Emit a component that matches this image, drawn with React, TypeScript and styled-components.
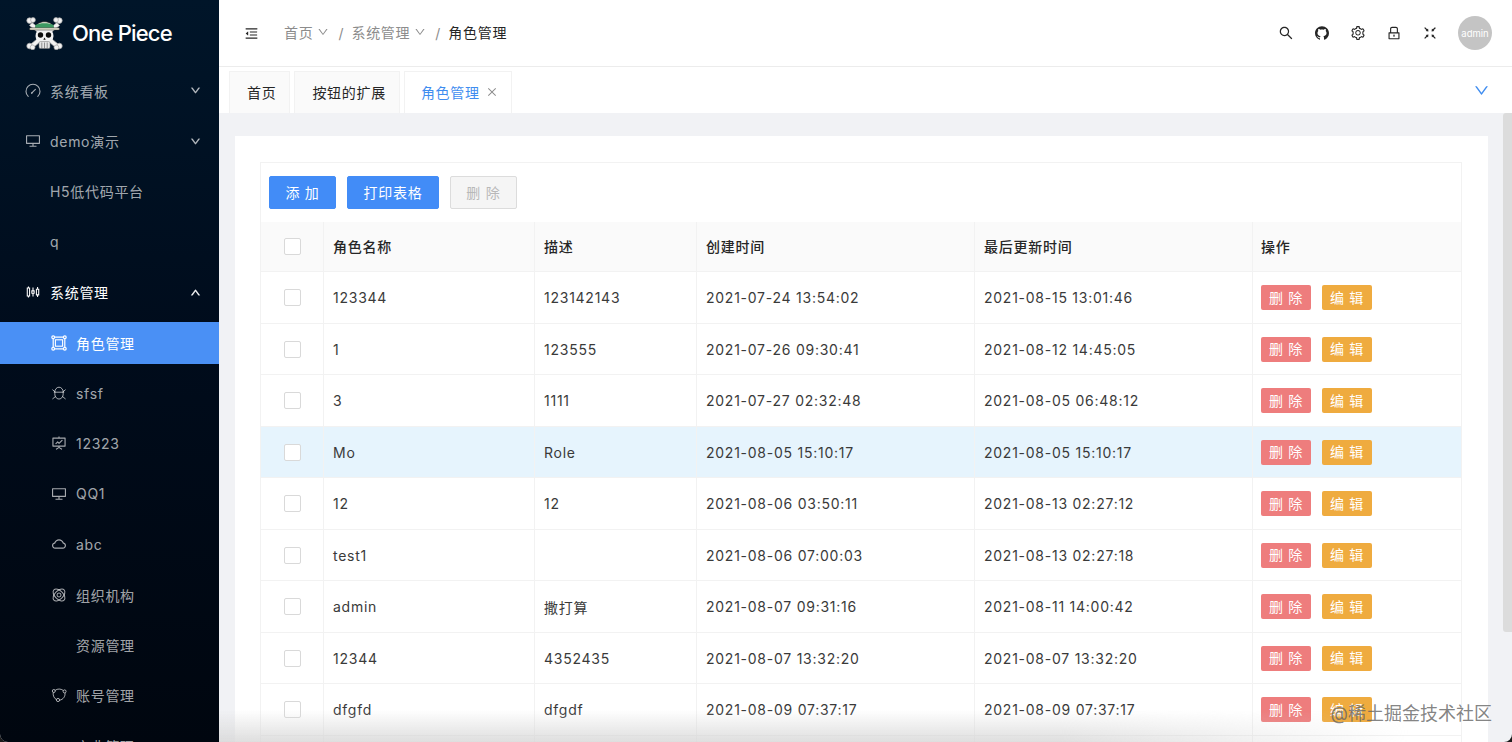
import React from "react";
import styled, { createGlobalStyle } from "styled-components";
import {
  AiOutlineDesktop, AiOutlineSliders,
  AiOutlineFundProjectionScreen, AiOutlineCloud, AiOutlineDown,
  AiOutlineUp, AiOutlineMenuFold, AiOutlineSearch, AiFillGithub, AiOutlineSetting,
  AiOutlineLock, AiOutlineFullscreenExit, AiOutlineClose,
} from "react-icons/ai";

const FONT = `Inter, "Noto Sans CJK SC", "Noto Sans", sans-serif`;

const Global = createGlobalStyle`
  html, body { margin: 0; padding: 0; height: 100%; overflow: hidden; }
  body { font-family: ${FONT}; font-size: 14px; color: #262626; background: #1a1a1a; }
  #root { height: 742px; }
  * { box-sizing: border-box; }
`;

const Shell = styled.div`
  position: relative;
  display: flex;
  width: 1512px;
  height: 742px;
  overflow: hidden;
  background: #f1f2f5;
  border-radius: 0 0 8px 8px;
`;
const Sidebar = styled.aside`
  flex: 0 0 219px;
  height: 742px;
  overflow: hidden;
  background: linear-gradient(180deg, #001529 0%, #000c1c 45%, #00060f 100%);
`;
const LogoRow = styled.div`
  display: flex;
  align-items: center;
  gap: 9px;
  height: 66px;
  padding-left: 26px;
`;
const LogoText = styled.span`
  color: #fff;
  font-size: 22px;
  font-weight: 500;
  letter-spacing: -0.8px;
`;
const MenuItem = styled.div<{ $level?: number; $active?: boolean; $open?: boolean }>`
  display: flex;
  align-items: center;
  height: ${(p) => (p.$active ? "42px" : "50.4px")};
  margin: ${(p) => (p.$active ? "4.2px 0" : "0")};
  padding-left: ${(p) => (p.$level ? 51 : 25)}px;
  padding-bottom: 1px;
  color: ${(p) => (p.$active || p.$open ? "#fff" : "rgba(255,255,255,.65)")};
  background: ${(p) => (p.$active ? "#4a90f5" : "transparent")};
  font-size: 14px;
  letter-spacing: 0.7px;
`;
const IconSlot = styled.span`
  display: inline-flex;
  flex: 0 0 16px;
  width: 16px;
  margin-right: 9px;
  justify-content: center;
  font-size: 16px;
`;
const ItemLabel = styled.span`
  flex: 1;
`;
const Caret = styled.span`
  display: inline-flex;
  margin-right: 18px;
  font-size: 11px;
  svg { stroke: currentColor; stroke-width: 50; }
`;
const Main = styled.main`
  flex: 1;
  min-width: 0;
  display: flex;
  flex-direction: column;
`;
const Header = styled.header`
  flex: 0 0 67px;
  display: flex;
  align-items: center;
  padding: 0 20px 0 25px;
  background: #fff;
  border-bottom: 1px solid #ececec;
`;
const Fold = styled.span`
  display: inline-flex;
  font-size: 15px;
  color: #262626;
  margin-right: 25px;
`;
const Crumb = styled.span<{ $current?: boolean }>`
  display: inline-flex;
  align-items: center;
  gap: 4px;
  padding-bottom: 2px;
  letter-spacing: 0.7px;
  color: ${(p) => (p.$current ? "#262626" : "#8c8c8c")};
  svg { font-size: 12px; }
`;
const Slash = styled.span`
  margin: 0 8px 0 9px;
  color: #8c8c8c;
`;
const HeaderIcons = styled.div`
  margin-left: auto;
  display: flex;
  align-items: center;
  gap: 20px;
  color: #262626;
`;
const HeaderIcon = styled.span<{ $size?: number }>`
  display: inline-flex;
  justify-content: center;
  width: 16px;
  font-size: ${(p) => p.$size || 16}px;
`;
const Avatar = styled.span`
  display: flex;
  align-items: center;
  justify-content: center;
  width: 34px;
  height: 34px;
  border-radius: 50%;
  background: #c4c4c4;
  color: #fff;
  font-size: 9.5px;
`;
const TabBar = styled.div`
  flex: 0 0 46px;
  display: flex;
  align-items: flex-end;
  gap: 4px;
  padding: 0 22px 0 10px;
  background: #fff;
`;
const Tab = styled.div<{ $active?: boolean }>`
  display: flex;
  align-items: center;
  gap: 6px;
  height: 42px;
  padding: ${(p) => (p.$active ? "0 13px 2px 16px" : "0 13px 2px 17px")};
  letter-spacing: 0.7px;
  background: ${(p) => (p.$active ? "#fff" : "#fafafa")};
  border: 1px solid #f2f2f2;
  border-bottom: none;
  color: ${(p) => (p.$active ? "#3f8df0" : "#262626")};
  svg { color: #8c8c8c; font-size: 12px; }
`;
const TabsToggle = styled.span`
  margin-left: auto;
  margin-bottom: 14px;
  color: #3f8df0;
  font-size: 17px;
  display: inline-flex;
`;
const Content = styled.div`
  flex: 1;
  min-height: 0;
  padding: 23px 24px 0 16px;
  overflow: hidden;
`;
const Card = styled.section`
  background: #fff;
  padding: 26px 26px 0 25px;
  height: 640px;
`;
const TableCard = styled.div`
  border: 1px solid #f2f2f2;
  border-bottom: none;
`;
const Toolbar = styled.div`
  display: flex;
  gap: 11px;
  height: 59px;
  padding: 13px 0 0 8px;
`;
const Btn = styled.button<{ $disabled?: boolean }>`
  height: 33px;
  padding: 0 15.5px 2px;
  border-radius: 2px;
  border: 1px solid ${(p) => (p.$disabled ? "#dcdcdc" : "#428cf7")};
  background: ${(p) => (p.$disabled ? "#f5f5f5" : "#428cf7")};
  color: ${(p) => (p.$disabled ? "#b8b8b8" : "#fff")};
  font-family: ${FONT};
  font-size: 14px;
  letter-spacing: 0.7px;
`;
const Grid = styled.div`
  display: grid;
  grid-template-columns: 63px 211px 162px 278px 278px 1fr;
`;
const Cell = styled.div<{ $head?: boolean; $row?: string; $last?: boolean }>`
  display: flex;
  align-items: center;
  gap: 11px;
  height: ${(p) => (p.$head ? "50.4px" : "51.5px")};
  padding-left: ${(p) => (p.$last ? "8px" : "9px")};
  padding-bottom: ${(p) => (p.$head ? "2px" : "0")};
  background: ${(p) => (p.$row ? p.$row : p.$head ? "#fafafa" : "#fff")};
  border-bottom: 1px solid #f2f2f2;
  border-right: ${(p) => (p.$last ? "none" : "1px solid #f2f2f2")};
  font-weight: ${(p) => (p.$head ? 500 : 400)};
  color: ${(p) => (p.$head ? "#262626" : "#3a3a3a")};
  letter-spacing: 0.75px;
`;
const CheckCell = styled(Cell)`
  justify-content: center;
  padding-left: 0;
  padding-bottom: 0;
`;
const Check = styled.span`
  width: 17px;
  height: 17px;
  border: 1px solid #d9d9d9;
  border-radius: 2px;
  background: #fff;
`;
const RowBtn = styled.span<{ $color: string }>`
  display: inline-flex;
  align-items: center;
  justify-content: center;
  width: 50px;
  height: 25px;
  padding-bottom: 2px;
  border-radius: 2px;
  background: ${(p) => p.$color};
  color: #fff;
  font-size: 14px;
  letter-spacing: 0.7px;
`;
const Scrollbar = styled.div`
  position: absolute;
  right: 0;
  top: 113px;
  width: 9px;
  height: 519px;
  background: #dcdcdc;
  border-radius: 3px 0 0 3px;
`;
const BottomFade = styled.div`
  position: absolute;
  left: 219px;
  right: 0;
  bottom: 0;
  height: 32px;
  background: linear-gradient(180deg, rgba(225,225,225,0) 0%, rgba(214,214,214,.8) 100%);
  -webkit-mask-image: linear-gradient(90deg, #000 65%, transparent 92%);
  mask-image: linear-gradient(90deg, #000 65%, transparent 92%);
  pointer-events: none;
`;
const Watermark = styled.div`
  position: absolute;
  right: 20px;
  top: 699px;
  font-size: 18px;
  color: rgba(100,100,100,.8);
  pointer-events: none;
`;

const Gauge = () => (
  <svg width="16" height="16" viewBox="0 0 16 16" fill="none" stroke="currentColor" strokeWidth="1.1" strokeLinecap="round">
    <path d="M3.2 13.4 A7 7 0 1 1 12.8 13.4" />
    <path d="M6.6 10.2 L10.4 6.4" />
    <circle cx="6.9" cy="10" r="0.7" fill="currentColor" stroke="none" />
  </svg>
);

const Group = () => (
  <svg width="16" height="16" viewBox="0 0 16 16" fill="none" stroke="currentColor" strokeWidth="1.2">
    <path d="M3.5 2.2h9M3.5 13.8h9M2.2 3.5v9M13.8 3.5v9" />
    <rect x="4.4" y="4.8" width="7.2" height="6.4" strokeWidth="1.1" />
    <circle cx="2.2" cy="2.2" r="1.4" />
    <circle cx="13.8" cy="2.2" r="1.4" />
    <circle cx="2.2" cy="13.8" r="1.4" />
    <circle cx="13.8" cy="13.8" r="1.4" />
  </svg>
);

const Bug = () => (
  <svg width="16" height="16" viewBox="0 0 16 16" fill="none" stroke="currentColor" strokeWidth="1">
    <path d="M3.8 7.2 A4.2 5 0 0 1 12.2 7.2" />
    <path d="M2.8 7.2h10.4" />
    <path d="M4 7.2 C3.2 11 5.2 14 8 14 C10.8 14 12.8 11 12 7.2" />
    <path d="M1.4 4.6 L4 6.8M14.6 4.6 L12 6.8M1.4 14 L4.4 11.6M14.6 14 L11.6 11.6" />
  </svg>
);

const Atom = () => (
  <svg width="16" height="16" viewBox="0 0 16 16" fill="none" stroke="currentColor" strokeWidth="1">
    <ellipse cx="8" cy="8" rx="7.2" ry="4.2" transform="rotate(45 8 8)" />
    <ellipse cx="8" cy="8" rx="7.2" ry="4.2" transform="rotate(-45 8 8)" />
    <circle cx="8" cy="8" r="2" />
  </svg>
);

const Orbit = () => (
  <svg width="16" height="16" viewBox="0 0 16 16" fill="none" stroke="currentColor" strokeWidth="1">
    <circle cx="2.8" cy="4" r="1.5" />
    <circle cx="13.6" cy="4.4" r="1.5" />
    <circle cx="7" cy="13" r="1.6" />
    <path d="M4.2 3.3 C6.5 1.6 9.8 1.6 12.2 3.4" />
    <path d="M14 6 C14.4 9 12.4 12.6 8.6 13.2" />
    <path d="M5.4 12.6 C3.2 11.4 1.8 8.6 2.2 5.6" />
  </svg>
);

const Logo = () => (
  <svg width="37" height="33" viewBox="0 0 37 33">
    <g stroke="#a8a8a8" strokeWidth="0.7" fill="#f2f2f2">
      <path d="M6 5.5 L32 27 L29 30 L3.5 8.5 Z" />
      <path d="M31 5.5 L5 27 L8 30 L33.5 8.5 Z" />
      <circle cx="3.6" cy="3.6" r="2.8" />
      <circle cx="7" cy="3" r="2.4" />
      <circle cx="33.4" cy="3.6" r="2.8" />
      <circle cx="30" cy="3" r="2.4" />
      <circle cx="3.6" cy="29" r="2.8" />
      <circle cx="6.6" cy="30.4" r="2.4" />
      <circle cx="33.4" cy="29" r="2.8" />
      <circle cx="30.4" cy="30.4" r="2.4" />
    </g>
    <ellipse cx="18.5" cy="19" rx="9" ry="8.6" fill="#f2f2f2" />
    <rect x="13" y="24.5" width="11" height="7" rx="1.5" fill="#e4e4e4" stroke="#777" strokeWidth="0.5" />
    <path d="M15.8 25.5v6M18.5 25.5v6M21.2 25.5v6" stroke="#555" strokeWidth="0.6" />
    <path d="M9.5 11 C10.5 2.5 26.5 2.5 27.5 11 Z" fill="#dfe3d2" stroke="#222" strokeWidth="0.6" />
    <path d="M9.4 8 C14 5.8 23 5.8 27.6 8 L27.8 11 L9.2 11 Z" fill="#3d9a63" />
    <rect x="3.5" y="10.8" width="30" height="2.2" rx="1.1" fill="#ecebd8" stroke="#222" strokeWidth="0.5" />
    <circle cx="14.5" cy="18" r="2.7" fill="#0c0c0c" />
    <circle cx="22.5" cy="18" r="2.7" fill="#0c0c0c" />
    <path d="M18.5 20.6 l-1.2 2.2 h2.4 Z" fill="#0c0c0c" />
  </svg>
);

type MI = { label: string; icon?: React.ReactNode; level?: number; active?: boolean; open?: boolean; caret?: "down" | "up" };
const menu: MI[] = [
  { label: "系统看板", icon: <Gauge />, caret: "down" },
  { label: "demo演示", icon: <AiOutlineDesktop />, caret: "down" },
  { label: "H5低代码平台", icon: <span /> },
  { label: "q", icon: <span /> },
  { label: "系统管理", icon: <AiOutlineSliders />, caret: "up", open: true },
  { label: "角色管理", icon: <Group />, level: 1, active: true },
  { label: "sfsf", icon: <Bug />, level: 1 },
  { label: "12323", icon: <AiOutlineFundProjectionScreen />, level: 1 },
  { label: "QQ1", icon: <AiOutlineDesktop />, level: 1 },
  { label: "abc", icon: <AiOutlineCloud />, level: 1 },
  { label: "组织机构", icon: <Atom />, level: 1 },
  { label: "资源管理", icon: <span />, level: 1 },
  { label: "账号管理", icon: <Orbit />, level: 1 },
  { label: "字典管理", icon: <span />, level: 1 },
];

const rows = [
  ["123344", "123142143", "2021-07-24 13:54:02", "2021-08-15 13:01:46"],
  ["1", "123555", "2021-07-26 09:30:41", "2021-08-12 14:45:05"],
  ["3", "1111", "2021-07-27 02:32:48", "2021-08-05 06:48:12"],
  ["Mo", "Role", "2021-08-05 15:10:17", "2021-08-05 15:10:17"],
  ["12", "12", "2021-08-06 03:50:11", "2021-08-13 02:27:12"],
  ["test1", "", "2021-08-06 07:00:03", "2021-08-13 02:27:18"],
  ["admin", "撒打算", "2021-08-07 09:31:16", "2021-08-11 14:00:42"],
  ["12344", "4352435", "2021-08-07 13:32:20", "2021-08-07 13:32:20"],
  ["dfgfd", "dfgdf", "2021-08-09 07:37:17", "2021-08-09 07:37:17"],
];

export default function App() {
  return (
    <Shell>
      <Global />
      <Sidebar>
        <LogoRow>
          <Logo />
          <LogoText>One Piece</LogoText>
        </LogoRow>
        {menu.map((m) => (
          <MenuItem key={m.label} $level={m.level} $active={m.active} $open={m.open}>
            <IconSlot>{m.icon}</IconSlot>
            <ItemLabel>{m.label}</ItemLabel>
            {m.caret && <Caret>{m.caret === "down" ? <AiOutlineDown /> : <AiOutlineUp />}</Caret>}
          </MenuItem>
        ))}
      </Sidebar>
      <Main>
        <Header>
          <Fold><AiOutlineMenuFold /></Fold>
          <Crumb>首页 <AiOutlineDown /></Crumb>
          <Slash>/</Slash>
          <Crumb>系统管理 <AiOutlineDown /></Crumb>
          <Slash>/</Slash>
          <Crumb $current>角色管理</Crumb>
          <HeaderIcons>
            <HeaderIcon><AiOutlineSearch /></HeaderIcon>
            <HeaderIcon $size={18}><AiFillGithub /></HeaderIcon>
            <HeaderIcon><AiOutlineSetting /></HeaderIcon>
            <HeaderIcon><AiOutlineLock /></HeaderIcon>
            <HeaderIcon><AiOutlineFullscreenExit /></HeaderIcon>
            <Avatar>admin</Avatar>
          </HeaderIcons>
        </Header>
        <TabBar>
          <Tab>首页</Tab>
          <Tab>按钮的扩展</Tab>
          <Tab $active>角色管理 <AiOutlineClose /></Tab>
          <TabsToggle><AiOutlineDown /></TabsToggle>
        </TabBar>
        <Content>
          <Card>
            <TableCard>
              <Toolbar>
                <Btn>添 加</Btn>
                <Btn>打印表格</Btn>
                <Btn $disabled>删 除</Btn>
              </Toolbar>
              <Grid>
                <CheckCell $head><Check /></CheckCell>
                <Cell $head>角色名称</Cell>
                <Cell $head>描述</Cell>
                <Cell $head>创建时间</Cell>
                <Cell $head>最后更新时间</Cell>
                <Cell $head $last>操作</Cell>
                {rows.map((r, i) => {
                  const bg = i === 3 ? "#e6f4fd" : undefined;
                  return (
                    <React.Fragment key={i}>
                      <CheckCell $row={bg}><Check /></CheckCell>
                      {r.map((v, j) => <Cell key={j} $row={bg}>{v}</Cell>)}
                      <Cell $row={bg} $last>
                        <RowBtn $color="#ee7d7d">删 除</RowBtn>
                        <RowBtn $color="#efab3f">编 辑</RowBtn>
                      </Cell>
                    </React.Fragment>
                  );
                })}
                <CheckCell />
                <Cell />
                <Cell />
                <Cell />
                <Cell />
                <Cell $last />
              </Grid>
            </TableCard>
          </Card>
        </Content>
      </Main>
      <Scrollbar />
      <BottomFade />
      <Watermark>@稀土掘金技术社区</Watermark>
    </Shell>
  );
}
